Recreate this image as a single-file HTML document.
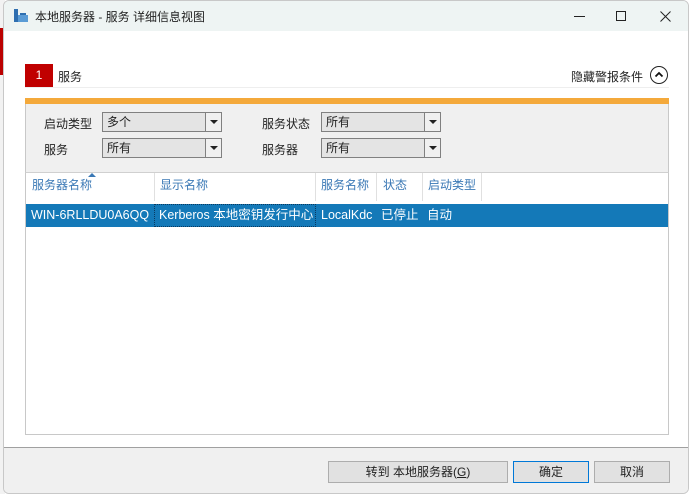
<!DOCTYPE html>
<html><head><meta charset="utf-8"><style>
*{margin:0;padding:0;box-sizing:border-box}
body{width:690px;height:494px;overflow:hidden;background:#fff;font-family:"Liberation Sans","Noto Sans CJK SC",sans-serif;font-size:12px;color:#222;position:relative}
.abs{position:absolute}
.win{left:3px;top:0px;width:686px;height:494px;border:1px solid #c8c8c8;border-radius:6px;background:#fff;overflow:hidden}
.title{left:0;top:0;width:100%;height:30px;background:#eef4f3}
.dd{position:absolute;height:20px;border:1px solid #808080;background:#e4e4e4;font-size:12px;line-height:18px;padding-left:4px}
.dd b{position:absolute;right:0;top:0;width:16px;height:18px;border-left:1px solid #808080;background:#f0f0f0}
.dd b:after{content:"";position:absolute;left:4px;top:7px;border-left:4px solid transparent;border-right:4px solid transparent;border-top:4px solid #222}
.hd{position:absolute;top:175px;color:#3a78b5;font-size:12px}
.sep{position:absolute;top:172px;width:1px;height:28px;background:#e0e0e0}
.btn{position:absolute;top:460px;height:22px;border:1px solid #adadad;background:#e1e1e1;text-align:center;line-height:20px;font-size:12px}
</style></head><body>
<div class="abs" style="left:0;top:0;width:5px;height:494px;background:#f2f2f2"></div>
<div class="abs" style="left:0;top:28px;width:5px;height:47px;background:#b00"></div>
<div class="abs win">
 <div class="abs title"></div>
 <svg class="abs" style="left:9px;top:7px" width="16" height="16"><rect x="1" y="1" width="4" height="13" fill="#2f6fb0"/><rect x="5" y="7" width="10" height="7" fill="#5a9bd5"/><rect x="7" y="5" width="6" height="2" fill="#2f6fb0"/></svg>
 <div class="abs" style="left:31px;top:7px;font-size:12px">本地服务器 - 服务 详细信息视图</div>
 <div class="abs" style="left:570px;top:15px;width:11px;height:1px;background:#222"></div>
 <div class="abs" style="left:612px;top:10px;width:10px;height:10px;border:1px solid #222"></div>
 <svg class="abs" style="left:656px;top:10px" width="11" height="11"><path d="M0.5 0.5L10.5 10.5M10.5 0.5L0.5 10.5" stroke="#222"/></svg>

 <div class="abs" style="left:21px;top:63px;width:28px;height:23px;background:#c00000;color:#fff;text-align:center;line-height:23px;font-size:12px">1</div>
 <div class="abs" style="left:54px;top:67px">服务</div>
 <div class="abs" style="left:567px;top:67px">隐藏警报条件</div>
 <div class="abs" style="left:646px;top:65px;width:18px;height:18px;border:1px solid #222;border-radius:50%"></div>
 <svg class="abs" style="left:650px;top:69px" width="10" height="10"><path d="M1.5 6.5L5 3L8.5 6.5" stroke="#111" stroke-width="1.8" fill="none"/></svg>
 <div class="abs" style="left:21px;top:86px;width:644px;height:1px;background:#eee"></div>

 <div class="abs" style="left:21px;top:97px;width:644px;height:337px;border:1px solid #c8c8c8;border-top:none;background:#fff"></div>
 <div class="abs" style="left:21px;top:97px;width:644px;height:6px;background:#f4a93b"></div>
 <div class="abs" style="left:21px;top:103px;width:644px;height:69px;background:#f0f0f0;border-left:1px solid #c8c8c8;border-right:1px solid #c8c8c8;border-bottom:1px solid #d0d0d0"></div>
 <div class="abs" style="left:40px;top:114px">启动类型</div>
 <div class="abs" style="left:40px;top:140px">服务</div>
 <div class="dd" style="left:98px;top:111px;width:120px">多个<b></b></div>
 <div class="dd" style="left:98px;top:137px;width:120px">所有<b></b></div>
 <div class="abs" style="left:258px;top:114px">服务状态</div>
 <div class="abs" style="left:258px;top:140px">服务器</div>
 <div class="dd" style="left:317px;top:111px;width:120px">所有<b></b></div>
 <div class="dd" style="left:317px;top:137px;width:120px">所有<b></b></div>

 <div class="hd" style="left:28px">服务器名称</div>
 <svg class="abs" style="left:84px;top:172px" width="8" height="4"><path d="M0 4L4 0L8 4Z" fill="#3a78b5"/></svg>
 <div class="sep" style="left:150px"></div>
 <div class="hd" style="left:156px">显示名称</div>
 <div class="sep" style="left:311px"></div>
 <div class="hd" style="left:317px">服务名称</div>
 <div class="sep" style="left:372px"></div>
 <div class="hd" style="left:379px">状态</div>
 <div class="sep" style="left:418px"></div>
 <div class="hd" style="left:424px">启动类型</div>
 <div class="sep" style="left:477px"></div>

 <div class="abs" style="left:22px;top:203px;width:642px;height:23px;background:#1479b8;color:#fff;font-size:12.5px;line-height:23px">
  <span class="abs" style="left:5px">WIN-6RLLDU0A6QQ</span>
  <span class="abs" style="left:128px;top:0;width:162px;height:23px;border:1px dotted #0a3a60"></span>
  <span class="abs" style="left:133px">Kerberos 本地密钥发行中心</span>
  <span class="abs" style="left:295px">LocalKdc</span>
  <span class="abs" style="left:355px">已停止</span>
  <span class="abs" style="left:401px">自动</span>
 </div>

 <div class="abs" style="left:0;top:446px;width:100%;height:1px;background:#a0a0a0"></div>
 <div class="abs" style="left:0;top:447px;width:100%;height:46px;background:#f0f0f0"></div>
 <div class="btn" style="left:324px;width:180px">转到 本地服务器(<u>G</u>)</div>
 <div class="btn" style="left:509px;width:76px;border-color:#0078d7">确定</div>
 <div class="btn" style="left:590px;width:76px">取消</div>
</div>
</body></html>
